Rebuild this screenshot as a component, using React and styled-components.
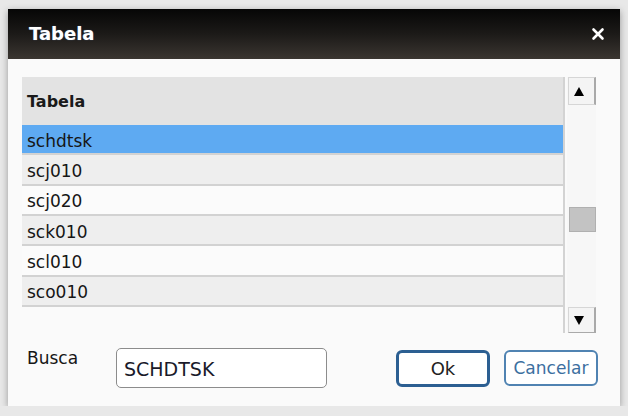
import React from "react";
import styled, { createGlobalStyle } from "styled-components";

const Global = createGlobalStyle`
  html, body { margin: 0; padding: 0; background: #e8e8e8; }
  body { font-family: "DejaVu Sans", Verdana, sans-serif; }
  #root { padding: 9px 8px 0 8px; }
`;

const Dialog = styled.div`
  width: 612px;
  height: 397px;
  background: #fafafa;
  box-shadow: 0 2px 7px rgba(0, 0, 0, 0.35);
  display: flex;
  flex-direction: column;
`;

const TitleBar = styled.div`
  height: 50px;
  flex: none;
  background: linear-gradient(to bottom, #060606 0%, #1c1a18 50%, #3b3631 100%);
  display: flex;
  align-items: center;
  justify-content: space-between;
  padding: 0 15px 0 21px;
  box-sizing: border-box;
`;

const Title = styled.div`
  color: #fff;
  font-weight: bold;
  font-size: 18px;
  margin-top: -1px;
  text-shadow: 0 0 1px rgba(120, 170, 255, 0.6);
`;

const Close = styled.button`
  background: none;
  border: none;
  padding: 0;
  width: 14px;
  height: 14px;
  display: flex;
  cursor: pointer;
`;

const ListArea = styled.div`
  margin: 18px 24px 0 14px;
  height: 256px;
  flex: none;
  display: flex;
  gap: 2px;
`;

const Table = styled.div`
  flex: 1;
  border-right: 2px solid #d3d3d3;
  display: flex;
  flex-direction: column;
`;

const HeaderRow = styled.div`
  height: 48px;
  flex: none;
  background: #e3e3e3;
  display: flex;
  align-items: center;
  padding-left: 5px;
  font-weight: bold;
  font-size: 16px;
  color: #1a1a1a;
`;

const Row = styled.div`
  height: 28.34px;
  flex: none;
  box-sizing: content-box;
  border-bottom: 2px solid #d2d2d2;
  background: ${(p) => (p.$selected ? "#5eaaf2" : p.$alt ? "#eeeeee" : "#fbfbfb")};
  display: flex;
  align-items: center;
  padding-left: 5px;
  padding-top: 0;
  font-size: 17px;
  line-height: 20px;
  color: #161616;
  & > span { margin-top: 3px; }
`;

const Scrollbar = styled.div`
  width: 29px;
  display: flex;
  flex-direction: column;
  background: #f7f7f7;
`;

const ScrollButton = styled.div`
  height: ${(p) => p.$h}px;
  flex: none;
  box-sizing: border-box;
  margin-left: 1px;
  background: #f4f4f4;
  border: 1px solid #d6d6d6;
  border-right: 2px solid #a9a9a9;
  border-bottom-color: ${(p) => (p.$down ? "#a9a9a9" : "#d6d6d6")};
  display: flex;
  align-items: center;
  padding-left: 5px;
`;

const Track = styled.div`
  flex: 1;
`;

const Thumb = styled.div`
  margin-top: 102px;
  margin-left: 2px;
  height: 25px;
  box-sizing: border-box;
  background: #c3c3c3;
  border: 1px solid #b0b0b0;
`;

const Footer = styled.div`
  display: flex;
  align-items: center;
  margin: 14px 22px 0 19px;
  height: 42px;
`;

const Label = styled.div`
  width: 89px;
  align-self: flex-start;
  margin-top: 1px;
  font-size: 17px;
  line-height: 20px;
  color: #161616;
`;

const Input = styled.input`
  width: 211px;
  height: 40px;
  box-sizing: border-box;
  border: 1.5px solid #8c8c8c;
  border-radius: 5px;
  background: #fff;
  padding: 2px 0 0 7px;
  font-family: "DejaVu Sans", Verdana, sans-serif;
  font-size: 19px;
  color: #1a1a2a;
  outline: none;
`;

const Spacer = styled.div`
  flex: 1;
`;

const Button = styled.button`
  width: 94px;
  height: ${(p) => (p.$primary ? 37 : 36)}px;
  box-sizing: border-box;
  margin-left: ${(p) => (p.$primary ? 0 : 14)}px;
  background: #fff;
  border: ${(p) => (p.$primary ? "3px solid #2c5f92" : "2px solid #5083b2")};
  border-radius: 6px;
  font-family: "DejaVu Sans", Verdana, sans-serif;
  font-size: ${(p) => (p.$primary ? 18 : 17)}px;
  color: ${(p) => (p.$primary ? "#222" : "#3c6f9f")};
  padding: 0;
  cursor: pointer;
`;

const rows = ["schdtsk", "scj010", "scj020", "sck010", "scl010", "sco010"];

export default function App() {
  return (
    <>
      <Global />
      <Dialog>
        <TitleBar>
          <Title>Tabela</Title>
          <Close aria-label="close">
            <svg width="14" height="14" viewBox="0 0 14 14">
              <path d="M2.5 2.5 L11.5 11.5 M11.5 2.5 L2.5 11.5" stroke="#fff" strokeWidth="2.6" strokeLinecap="round" />
            </svg>
          </Close>
        </TitleBar>
        <ListArea>
          <Table>
            <HeaderRow>Tabela</HeaderRow>
            {rows.map((r, i) => (
              <Row key={r} $selected={i === 0} $alt={i % 2 === 1}>
                <span>{r}</span>
              </Row>
            ))}
          </Table>
          <Scrollbar>
            <ScrollButton $h={28}>
              <svg width="10" height="9" viewBox="0 0 10 9">
                <path d="M5 0 L10 9 L0 9 Z" fill="#000" />
              </svg>
            </ScrollButton>
            <Track>
              <Thumb />
            </Track>
            <ScrollButton $h={26} $down>
              <svg width="10" height="9" viewBox="0 0 10 9">
                <path d="M0 0 L10 0 L5 9 Z" fill="#000" />
              </svg>
            </ScrollButton>
          </Scrollbar>
        </ListArea>
        <Footer>
          <Label>Busca</Label>
          <Input defaultValue="SCHDTSK" />
          <Spacer />
          <Button $primary>Ok</Button>
          <Button>Cancelar</Button>
        </Footer>
      </Dialog>
    </>
  );
}
